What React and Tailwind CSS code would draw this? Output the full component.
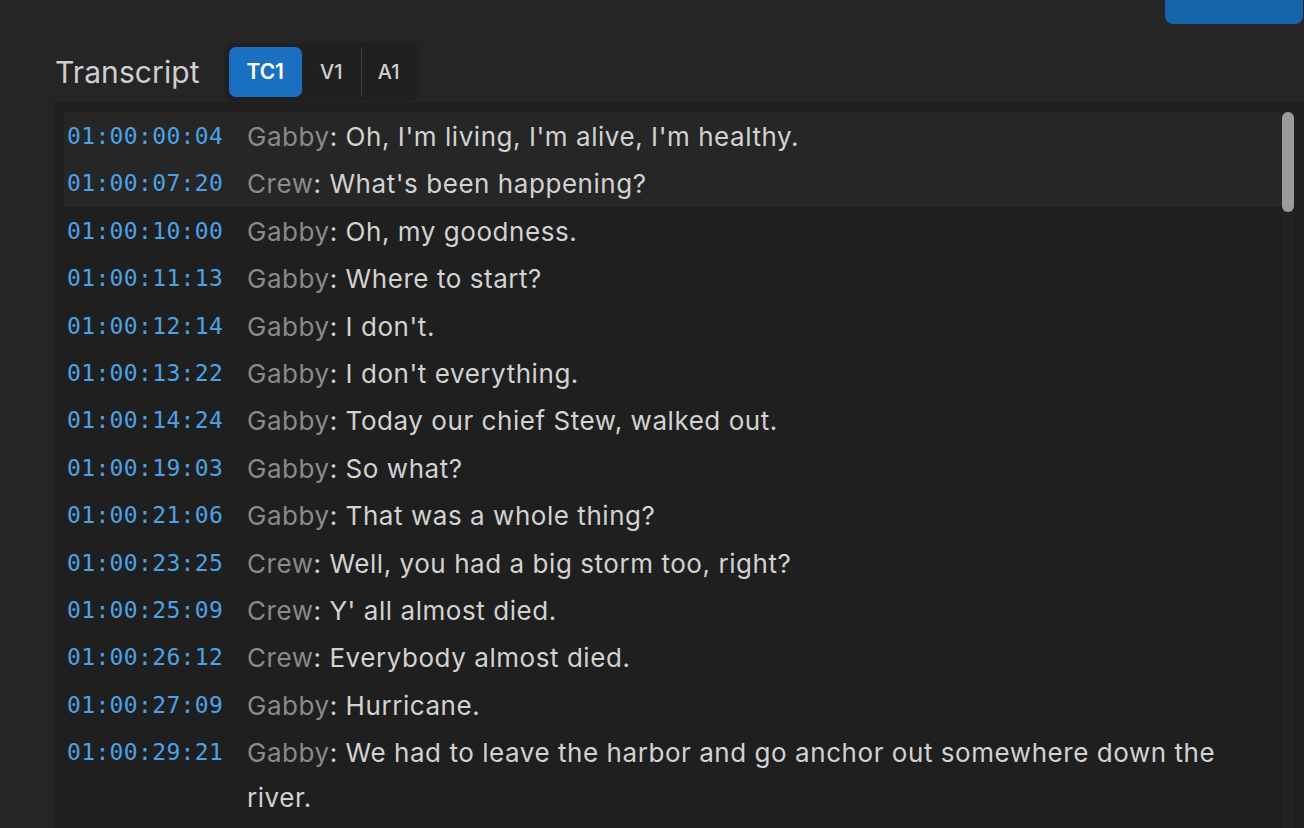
import React from "react";

const rows = [
  ["01:00:00:04", "Gabby", "Oh, I'm living, I'm alive, I'm healthy.", true],
  ["01:00:07:20", "Crew", "What's been happening?", true],
  ["01:00:10:00", "Gabby", "Oh, my goodness."],
  ["01:00:11:13", "Gabby", "Where to start?"],
  ["01:00:12:14", "Gabby", "I don't."],
  ["01:00:13:22", "Gabby", "I don't everything."],
  ["01:00:14:24", "Gabby", "Today our chief Stew, walked out."],
  ["01:00:19:03", "Gabby", "So what?"],
  ["01:00:21:06", "Gabby", "That was a whole thing?"],
  ["01:00:23:25", "Crew", "Well, you had a big storm too, right?"],
  ["01:00:25:09", "Crew", "Y' all almost died."],
  ["01:00:26:12", "Crew", "Everybody almost died."],
  ["01:00:27:09", "Gabby", "Hurricane."],
  ["01:00:29:21", "Gabby", "We had to leave the harbor and go anchor out somewhere down the river."],
];

function Row({ tc, who, text, hl }) {
  return (
    <div className={`flex items-start pt-[2px] pb-[0.4px] pl-[3px] ${hl ? "bg-[#262626]" : ""}`}>
      <div className="w-[180px] shrink-0 text-[23px] leading-[45px] tracking-[0.35px] text-[#4ba3e6] font-['DejaVu_Sans_Mono',monospace]">
        {tc}
      </div>
      <div className="w-[1000px] text-[26px] leading-[45px] tracking-[0.55px] text-[#d2d2d2]">
        <span className="text-[#8a8a8a]">{who}</span>: {text}
      </div>
    </div>
  );
}

export default function App() {
  return (
    <div className="w-[1304px] h-[828px] overflow-hidden bg-[#252525] font-['Inter',sans-serif] flex flex-col">
      <div className="h-[24px] flex justify-end pr-[1px]">
        <div className="w-[138px] h-[24px] bg-[#1864ab] rounded-b-[8px]" />
      </div>
      <div className="mt-[19px] h-[58px] flex items-center pl-[55px]">
        <div className="text-[30px] text-[#cfcfcf] tracking-[0.1px]">Transcript</div>
        <div className="ml-[24px] h-[58px] bg-[#202020] rounded-[9px] p-[5px] pr-[4px] flex items-center">
          <div className="w-[73px] h-[50px] bg-[#1b6fc0] rounded-[7px] flex items-center justify-center text-white text-[21px] font-semibold">
            TC1
          </div>
          <div className="w-[59px] h-[50px] flex items-center justify-center text-[#d0d0d0] text-[20px] font-medium">
            V1
          </div>
          <div className="w-[1px] h-[50px] bg-[#3c3c3c]" />
          <div className="w-[54px] h-[50px] flex items-center justify-center text-[#d0d0d0] text-[20px] font-medium">
            A1
          </div>
        </div>
      </div>
      <div className="mt-[1px] ml-[54px] flex-1 bg-[#1f1f1f] p-[10px] pb-0 flex min-h-0">
        <div className="flex-1 flex flex-col overflow-hidden">
          {rows.map((r, i) => (
            <Row key={i} tc={r[0]} who={r[1]} text={r[2]} hl={r[3]} />
          ))}
        </div>
        <div className="w-[12px] bg-[#232323] relative">
          <div className="absolute left-0 top-0 w-[12px] h-[100px] rounded-full bg-[#9b9b9b]" />
        </div>
      </div>
    </div>
  );
}
